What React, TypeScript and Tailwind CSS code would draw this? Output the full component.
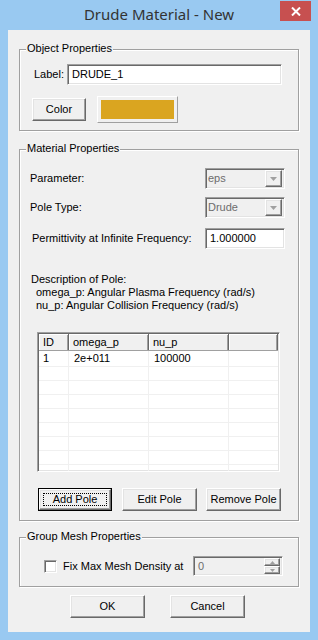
import React from "react";

const raised =
  "border border-t-white border-l-white border-r-[#696969] border-b-[#696969] shadow-[inset_-1px_-1px_0_#a0a0a0,inset_1px_1px_0_#e3e3e3] bg-[#f0f0f0]";
const sunken =
  "border border-t-[#a0a0a0] border-l-[#a0a0a0] border-r-white border-b-white shadow-[inset_1px_1px_0_#696969,inset_-1px_-1px_0_#e3e3e3]";

function Group({ title, className, children }: { title: string; className?: string; children: React.ReactNode }) {
  return (
    <div className={`relative border border-[#a0a0a0] shadow-[1px_1px_0_#fff,inset_1px_1px_0_#fff] ${className ?? ""}`}>
      <span className="absolute -top-[8px] left-[6px] bg-[#f0f0f0] px-[1px] leading-[13px]">{title}</span>
      {children}
    </div>
  );
}

function Button({ label, width, isDefault }: { label: string; width: string; isDefault?: boolean }) {
  if (isDefault) {
    return (
      <div className={`${width} h-[23px] border border-black`}>
        <div className={`${raised} h-full flex items-center justify-center p-[3px]`}>
          <span className="w-full h-full border border-dotted border-black flex items-center justify-center leading-none">
            {label}
          </span>
        </div>
      </div>
    );
  }
  return <div className={`${raised} ${width} h-[23px] flex items-center justify-center leading-none`}>{label}</div>;
}

function Combo({ value }: { value: string }) {
  return (
    <div className={`${sunken} w-[80px] h-[21px] bg-[#f0f0f0] flex items-center pl-[2px] pr-[2px]`}>
      <span className="flex-1 text-[#6d6d6d] leading-none">{value}</span>
      <div className={`${raised} w-[17px] h-[17px] flex items-center justify-center`}>
        <svg width="7" height="4" viewBox="0 0 7 4">
          <path d="M0 0h7L3.5 4z" fill="#a0a0a0" />
        </svg>
      </div>
    </div>
  );
}

const rows = [["1", "2e+011", "100000"], ["", "", ""], ["", "", ""], ["", "", ""], ["", "", ""], ["", "", ""], ["", "", ""], ["", "", ""], ["", "", ""]];

export default function App() {
  return (
    <div className="w-[318px] h-[640px] bg-[#99c9f1] font-['Liberation_Sans',Arial,sans-serif] text-[11px] text-black">
      <div className="relative h-[30px] flex items-center justify-center">
        <span className="font-['Noto_Sans',sans-serif] text-[15px] text-[#333] -mt-[1px]">Drude Material - New</span>
        <div className="absolute right-[7px] top-[1px] w-[31px] h-[20px] bg-[#c75050] flex items-center justify-center">
          <svg width="10" height="9" viewBox="0 0 10 9">
            <path d="M1 0.5l8 8M9 0.5l-8 8" stroke="#fff" strokeWidth="2" />
          </svg>
        </div>
      </div>

      <div className="mx-[8px] h-[602px] bg-[#f0f0f0] px-[11px] pt-[19px] flex flex-col">
        <Group title="Object Properties" className="pt-[14px] pl-[14px] pb-[7px]">
          <div className="flex items-center h-[21px]">
            <span className="w-[33px]">Label:</span>
            <div className={`${sunken} w-[215px] h-[21px] bg-white flex items-center pl-[4px]`}>DRUDE_1</div>
          </div>
          <div className="flex items-center h-[27px] mt-[11px] -ml-[2px]">
            <Button label="Color" width="w-[54px]" />
            <div className="ml-[11px] w-[81px] h-[27px] border border-t-white border-l-white border-r-[#a0a0a0] border-b-[#a0a0a0] p-[2px]">
              <div className="w-full h-full bg-[#daa520] border border-[#f0f0f0]" />
            </div>
          </div>
        </Group>

        <Group title="Material Properties" className="mt-[18px] pt-[18px] pb-[9px]">
          <div className="flex items-center justify-between h-[21px] pl-[10px] pr-[13px]">
            <span>Parameter:</span>
            <Combo value="eps" />
          </div>
          <div className="flex items-center justify-between h-[21px] mt-[8px] pl-[10px] pr-[13px]">
            <span>Pole Type:</span>
            <Combo value="Drude" />
          </div>
          <div className="flex items-center justify-between h-[21px] mt-[10px] pl-[12px] pr-[13px]">
            <span>Permittivity at Infinite Frequency:</span>
            <div className={`${sunken} w-[80px] h-[21px] bg-white flex items-center pl-[4px]`}>1.000000</div>
          </div>

          <div className="mt-[24px] pl-[11px] leading-[13px]">
            <div>Description of Pole:</div>
            <div className="pl-[5px]">omega_p: Angular Plasma Frequency (rad/s)</div>
            <div className="pl-[5px]">nu_p: Angular Collision Frequency (rad/s)</div>
          </div>

          <div className={`${sunken} ml-[17px] mt-[20px] w-[243px] h-[140px] bg-white p-[1px] overflow-hidden`}>
            <div className="flex h-[17px] bg-[#f0f0f0] border-b border-[#a0a0a0]">
              {[
                ["ID", "w-[30px]"],
                ["omega_p", "w-[80px]"],
                ["nu_p", "w-[80px]"],
                ["", "flex-1"],
              ].map(([h, w], i) => (
                <div
                  key={i}
                  className={`${w} h-full border-r border-[#696969] shadow-[inset_1px_1px_0_#fff,inset_-1px_0_0_#a0a0a0] flex items-center pl-[4px] leading-none`}
                >
                  {h}
                </div>
              ))}
            </div>
            {rows.map((r, i) => (
              <div key={i} className={`flex ${i === 0 ? "h-[16px]" : "h-[14px]"} border-b border-[#f0f0f0]`}>
                <div className="w-[30px] border-r border-[#f0f0f0] pl-[4px] flex items-center leading-none">{r[0]}</div>
                <div className="w-[80px] border-r border-[#f0f0f0] pl-[5px] flex items-center leading-none">{r[1]}</div>
                <div className="w-[80px] border-r border-[#f0f0f0] pl-[5px] flex items-center leading-none">{r[2]}</div>
                <div className="flex-1" />
              </div>
            ))}
          </div>

          <div className="flex mt-[16px] ml-[18px]">
            <Button label="Add Pole" width="w-[74px]" isDefault />
            <div className="ml-[10px]">
              <Button label="Edit Pole" width="w-[75px]" />
            </div>
            <div className="ml-[9px]">
              <Button label="Remove Pole" width="w-[75px]" />
            </div>
          </div>
        </Group>

        <Group title="Group Mesh Properties" className="mt-[16px] pt-[18px] pb-[10px]">
          <div className="flex items-center h-[20px] pl-[24px]">
            <div className={`${sunken} w-[13px] h-[13px] bg-white`} />
            <span className="ml-[6px]">Fix Max Mesh Density at</span>
            <div className={`${sunken} ml-auto mr-[15px] w-[90px] h-[20px] bg-[#f0f0f0] flex items-center pl-[4px] pr-[2px]`}>
              <span className="flex-1 text-[#6d6d6d] leading-none">0</span>
              <div className="flex flex-col w-[16px] h-[16px]">
                {["M0 3L2.5 0 5 3z", "M0 0h5L2.5 3z"].map((d, i) => (
                  <div key={i} className={`${raised} h-[8px] flex items-center justify-center`}>
                    <svg width="5" height="3" viewBox="0 0 5 3">
                      <path d={d} fill="#a0a0a0" />
                    </svg>
                  </div>
                ))}
              </div>
            </div>
          </div>
        </Group>

        <div className="flex mt-[8px] ml-[51px]">
          <Button label="OK" width="w-[75px]" />
          <div className="ml-[25px]">
            <Button label="Cancel" width="w-[75px]" />
          </div>
        </div>
      </div>
    </div>
  );
}
